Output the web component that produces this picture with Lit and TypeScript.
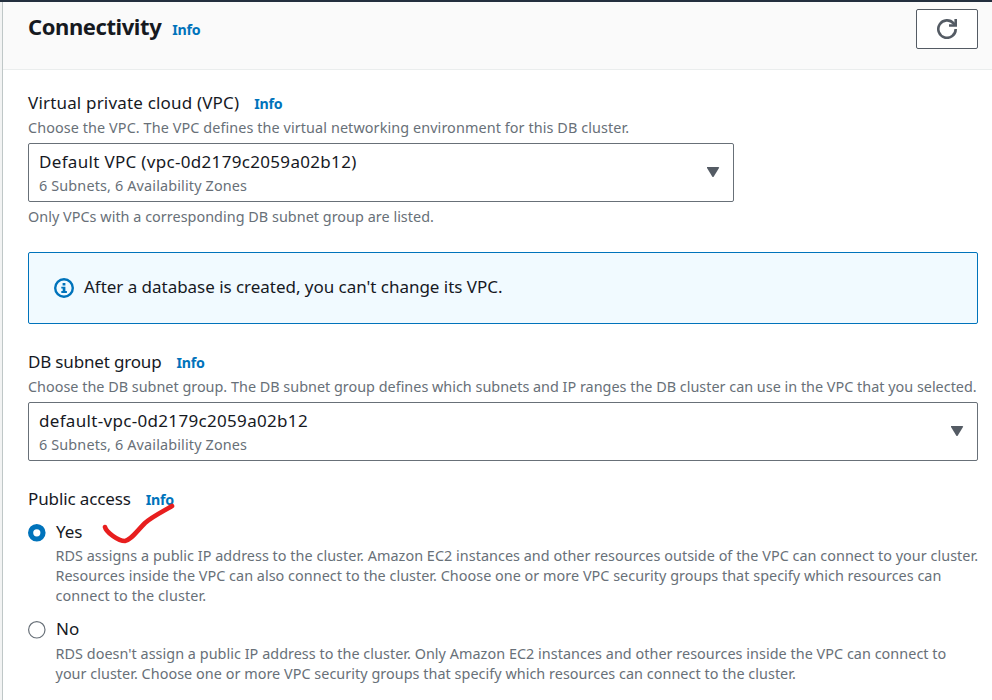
import { LitElement, html, css, svg } from "lit";
import { customElement, property } from "lit/decorators.js";
import { styleMap } from "lit/directives/style-map.js";

interface Line {
  text: string;
  tracking: number;
}

const yesLines: Line[] = [
  { text: "RDS assigns a public IP address to the cluster. Amazon EC2 instances and other resources outside of the VPC can connect to your cluster.", tracking: 0.037 },
  { text: "Resources inside the VPC can also connect to the cluster. Choose one or more VPC security groups that specify which resources can", tracking: 0.028 },
  { text: "connect to the cluster.", tracking: 0.11 },
];

const noLines: Line[] = [
  { text: "RDS doesn't assign a public IP address to the cluster. Only Amazon EC2 instances and other resources inside the VPC can connect to", tracking: 0.038 },
  { text: "your cluster. Choose one or more VPC security groups that specify which resources can connect to the cluster.", tracking: 0.038 },
];

@customElement("info-link")
class InfoLink extends LitElement {
  static styles = css`
    :host { display: inline-block; }
    .link {
      color: #0073bb;
      font-size: 14.2px;
      font-weight: 700;
      letter-spacing: -0.25px;
      text-decoration: none;
    }
  `;
  render() {
    return html`<a class="link">Info</a>`;
  }
}

@customElement("select-box")
class SelectBox extends LitElement {
  @property() label = "";
  @property() detail = "";
  static styles = css`
    :host { display: block; }
    .box {
      box-sizing: border-box;
      height: 59px;
      border: 1px solid #687078;
      border-radius: 2px;
      background: #fff;
      padding: 4px 13px 0 10px;
      display: flex;
      justify-content: space-between;
      white-space: nowrap;
    }
    .label { font-size: 17px; line-height: 28px; letter-spacing: 0.32px; color: #16191f; }
    .detail { font-size: 14.4px; line-height: 20px; letter-spacing: 0.15px; color: #687078; }
    .caret { display: block; width: 13px; height: 10px; margin-top: 19px; fill: #545b64; }
  `;
  render() {
    return html`<div class="box">
      <div>
        <div class="label">${this.label}</div>
        <div class="detail">${this.detail}</div>
      </div>
      <svg class="caret" viewBox="0 0 13 10"><path d="M.6 0H11.4Q12.6 0 12 1L6.8 9.4Q6 10.4 5.2 9.4L0 1Q-.6 0 .6 0Z" /></svg>
    </div>`;
  }
}

@customElement("radio-option")
class RadioOption extends LitElement {
  @property() label = "";
  @property({ type: Boolean }) checked = false;
  @property({ attribute: false }) lines: Line[] = [];
  static styles = css`
    :host { display: grid; grid-template-columns: 18px 1fr; column-gap: 9.5px; }
    .mark { width: 18px; height: 18px; margin-top: 6px; display: block; }
    .label { font-size: 17px; line-height: 28px; padding-left: 0.5px; color: #16191f; }
    .lines { padding-top: var(--lines-gap, 0); }
    .line { font-size: 14.4px; line-height: 20px; color: #687078; white-space: nowrap; }
  `;
  render() {
    return html`
      <svg class="mark" viewBox="0 0 18 18">
        ${this.checked
          ? svg`<circle cx="8.8" cy="8.8" r="6.2" fill="#fff" stroke="#0073bb" stroke-width="5.2" />`
          : svg`<circle cx="8.8" cy="8.8" r="8.2" fill="#fff" stroke="#687078" stroke-width="1.2" />`}
      </svg>
      <div>
        <div class="label">${this.label}</div>
        <div class="lines">
          ${this.lines.map((l) => html`<div class="line" style=${styleMap({ letterSpacing: `${l.tracking}px` })}>${l.text}</div>`)}
        </div>
      </div>`;
  }
}

@customElement("app-root")
class AppRoot extends LitElement {
  static styles = css`
    :host {
      display: block;
      height: 700px;
      overflow: hidden;
      box-sizing: border-box;
      border-top: 2px solid #232f3e;
      background: #f2f3f3;
      font-family: "Noto Sans", "Open Sans", sans-serif;
      color: #16191f;
    }
    .panel { margin-left: 2px; height: 698px; border-left: 1px solid #bfc7c7; background: #fff; }
    .header {
      box-sizing: border-box;
      height: 68px;
      background: #fafafa;
      border-bottom: 1px solid #eaeded;
      padding: 7px 14px 0 25px;
      display: flex;
      justify-content: space-between;
      align-items: flex-start;
    }
    .title-row { display: flex; align-items: baseline; gap: 11px; margin-top: -1px; }
    .title { margin: 0; font-size: 22px; line-height: 36px; font-weight: 700; letter-spacing: -0.42px; }
    .refresh {
      box-sizing: border-box;
      width: 62px;
      height: 40px;
      padding: 0;
      border: 1px solid #545b64;
      border-radius: 2px;
      background: #fff;
      display: flex;
      align-items: center;
      justify-content: center;
    }
    .refresh-icon { width: 20px; height: 20px; fill: none; stroke: #545b64; stroke-width: 2.6; }
    .content { padding: 19px 14px 0 25px; }
    .field-label { display: flex; align-items: baseline; gap: 15px; font-size: 17px; line-height: 28px; height: 29px; }
    .vpc { letter-spacing: 0.18px; }
    .subnet { letter-spacing: -0.17px; }
    .public { letter-spacing: -0.12px; }
    .hint { font-size: 14.4px; line-height: 20px; color: #687078; white-space: nowrap; }
    .hint-vpc { letter-spacing: 0.092px; }
    .hint-subnet { letter-spacing: 0.005px; }
    .select { margin-top: 5px; }
    .select-narrow { width: 706px; }
    .hint-after { margin-top: 5px; letter-spacing: 0.03px; }
    .alert {
      box-sizing: border-box;
      height: 72px;
      margin: 25px 0 24px;
      border: 1px solid #0073bb;
      border-radius: 2px;
      background: #f1faff;
      display: flex;
      align-items: center;
      padding-left: 25px;
      gap: 10px;
      font-size: 17px;
      letter-spacing: -0.03px;
    }
    .alert-icon { width: 20px; height: 20px; }
    .alert-text { padding-bottom: 3px; }
    .access { margin-top: 24px; position: relative; }
    .option { margin-top: 4px; }
    .option-next { margin-top: 9px; --lines-gap: 1px; }
    .tick { position: absolute; left: 74px; top: 18px; width: 76px; height: 42px; }
  `;
  render() {
    return html`<main class="panel">
      <header class="header">
        <div class="title-row"><h2 class="title">Connectivity</h2><info-link></info-link></div>
        <button class="refresh" aria-label="Refresh">
          <svg class="refresh-icon" viewBox="0 0 20 20">
            <path d="M18.7 10A8.7 8.7 0 1 1 16.6 4.4L18 6" />
            <path d="M18.7 0V6.5H12" />
          </svg>
        </button>
      </header>
      <div class="content">
        <div class="field-label"><span class="vpc">Virtual private cloud (VPC)</span><info-link></info-link></div>
        <div class="hint hint-vpc">Choose the VPC. The VPC defines the virtual networking environment for this DB cluster.</div>
        <select-box class="select select-narrow" label="Default VPC (vpc-0d2179c2059a02b12)" detail="6 Subnets, 6 Availability Zones"></select-box>
        <div class="hint hint-after">Only VPCs with a corresponding DB subnet group are listed.</div>
        <div class="alert">
          <svg class="alert-icon" viewBox="0 0 20 20">
            <circle cx="10" cy="10" r="8.8" fill="none" stroke="#0073bb" stroke-width="2.4" />
            <path d="M8.6 5H11.4V7.4H8.6ZM7.3 8.7H11.4V13H12.9V15H7.3V13H8.7V10.5H7.3Z" fill="#0073bb" />
          </svg>
          <span class="alert-text">After a database is created, you can't change its VPC.</span>
        </div>
        <div class="field-label"><span class="subnet">DB subnet group</span><info-link></info-link></div>
        <div class="hint hint-subnet">Choose the DB subnet group. The DB subnet group defines which subnets and IP ranges the DB cluster can use in the VPC that you selected.</div>
        <select-box class="select" label="default-vpc-0d2179c2059a02b12" detail="6 Subnets, 6 Availability Zones"></select-box>
        <section class="access">
          <div class="field-label"><span class="public">Public access</span><info-link></info-link></div>
          <radio-option class="option" checked label="Yes" .lines=${yesLines}></radio-option>
          <radio-option class="option-next" label="No" .lines=${noLines}></radio-option>
          <svg class="tick" viewBox="0 0 76 42" fill="none" stroke="#e81e1e" stroke-width="4.6" stroke-linecap="round" stroke-linejoin="round">
            <path d="M3 24C4 29 16 38 23 38C29 37 34 29 43 20C51 13 62 8 70 3" />
          </svg>
        </section>
      </div>
    </main>`;
  }
}
